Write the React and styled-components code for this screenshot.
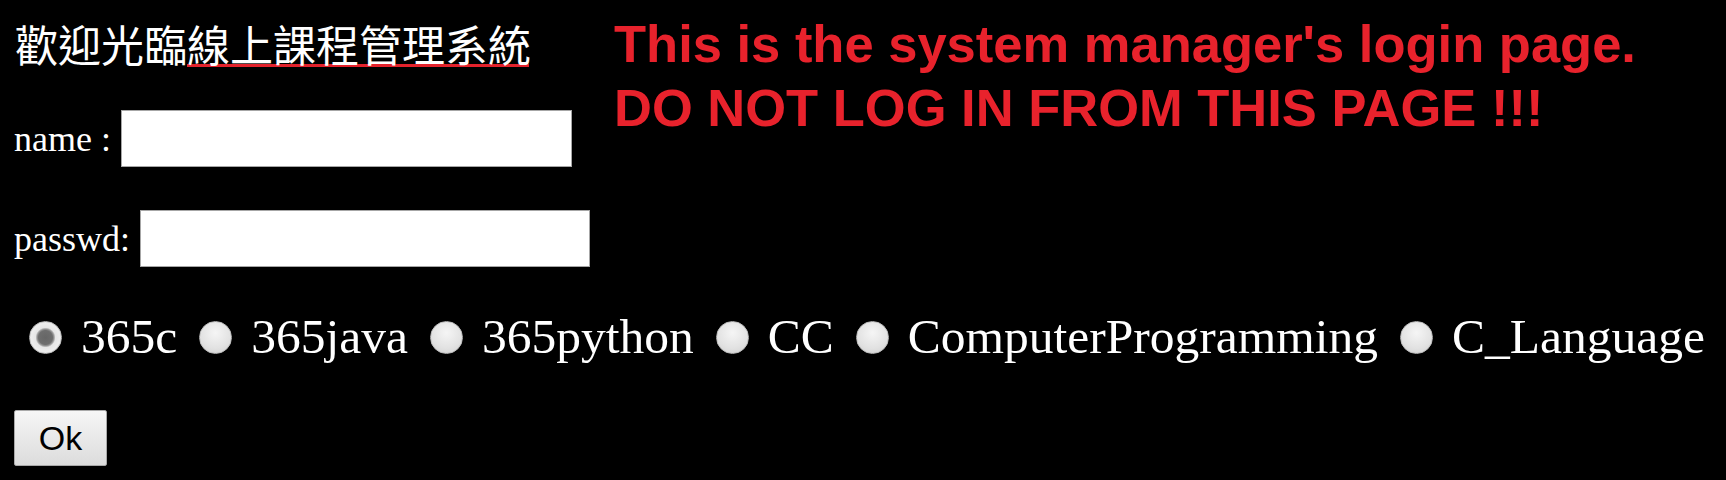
import React, { useState } from "react";
import styled, { createGlobalStyle } from "styled-components";

const GlobalStyle = createGlobalStyle`
  html, body {
    margin: 0;
    padding: 0;
    background: #000;
  }

  body {
    min-height: 100vh;
    color: #fff;
    font-family: "Liberation Serif", "Noto Sans CJK TC", serif;
  }
`;

const Page = styled.div`
  padding: 12px 14px 0;
`;

const Header = styled.div`
  display: flex;
  align-items: flex-start;
`;

const LoginColumn = styled.div`
  display: flex;
  flex-direction: column;
  width: 576px;
  flex-shrink: 0;
`;

const Title = styled.h1`
  margin: 0 0 0 1px;
  padding-top: 8px;
  font-family: "Liberation Serif", "Noto Sans CJK TC", serif;
  font-size: 43px;
  font-weight: 400;
  line-height: 56px;
  white-space: nowrap;
`;

const Marked = styled.span`
  background: linear-gradient(#e3222c, #e3222c) no-repeat 0 calc(100% - 4px) /
    calc(100% - 2px) 3px;
`;

const Notice = styled.div`
  margin-left: 24px;
  color: #e8222c;
  font-family: "Liberation Sans", Arial, sans-serif;
  font-size: 52.5px;
  font-weight: 700;
  line-height: 63.5px;
  white-space: nowrap;
`;

const Field = styled.label`
  display: flex;
  align-items: center;
  gap: 10px;
  margin-top: ${({ $top }) => $top}px;
  font-size: 36px;
  white-space: nowrap;
`;

const TextInput = styled.input`
  box-sizing: border-box;
  width: 451px;
  height: 57px;
  margin: 0;
  padding: 0 6px;
  border: 1px solid #a6a6a6;
  background: #fff;
  font-size: 28px;
  outline: none;
`;

const CourseRow = styled.div`
  display: flex;
  align-items: center;
  gap: 22px;
  margin-top: 42px;
  font-size: 49.5px;
  line-height: 56px;
  white-space: nowrap;
`;

const Course = styled.label`
  display: flex;
  align-items: center;
  gap: 19px;
`;

const Radio = styled.input`
  appearance: none;
  box-sizing: border-box;
  width: 33px;
  height: 33px;
  margin: 0 0 0 ${({ $first }) => ($first ? 15 : 0)}px;
  border: 1px solid #bdbdbd;
  border-radius: 50%;
  background: radial-gradient(circle at 50% 35%, #f5f5f5 0%, #e2e2e2 60%, #cfcfcf 100%);

  &:checked {
    background: radial-gradient(
      circle,
      #666 0,
      #6e6e6e 7px,
      #9a9a9a 8.5px,
      #e6e6e6 10px,
      #ededed 14px,
      #d4d4d4 100%
    );
  }
`;

const OkButton = styled.button`
  box-sizing: border-box;
  width: 93px;
  height: 56px;
  margin-top: 45px;
  padding: 0;
  border: 1px solid #a9a9a9;
  border-radius: 2px;
  background: linear-gradient(#f6f6f6, #dcdcdc);
  color: #000;
  font-family: "Liberation Sans", Arial, sans-serif;
  font-size: 34px;
  line-height: 1;
`;

const courses = [
  "365c",
  "365java",
  "365python",
  "CC",
  "ComputerProgramming",
  "C_Language",
];

const App = () => {
  const [course, setCourse] = useState("365c");

  return (
    <Page>
      <GlobalStyle />
      <Header>
        <LoginColumn>
          <Title>
            歡迎光臨<Marked>線上課程管理系統</Marked>
          </Title>
          <Field $top={34}>
            name :
            <TextInput type="text" />
          </Field>
          <Field $top={43}>
            passwd:
            <TextInput type="password" />
          </Field>
        </LoginColumn>
        <Notice>
          This is the system manager's login page.
          <br />
          DO NOT LOG IN FROM THIS PAGE !!!
        </Notice>
      </Header>
      <CourseRow>
        {courses.map((name, i) => (
          <Course key={name}>
            <Radio
              type="radio"
              name="course"
              $first={i === 0}
              checked={course === name}
              onChange={() => setCourse(name)}
            />
            {name}
          </Course>
        ))}
      </CourseRow>
      <OkButton type="button">Ok</OkButton>
    </Page>
  );
};

export default App;
